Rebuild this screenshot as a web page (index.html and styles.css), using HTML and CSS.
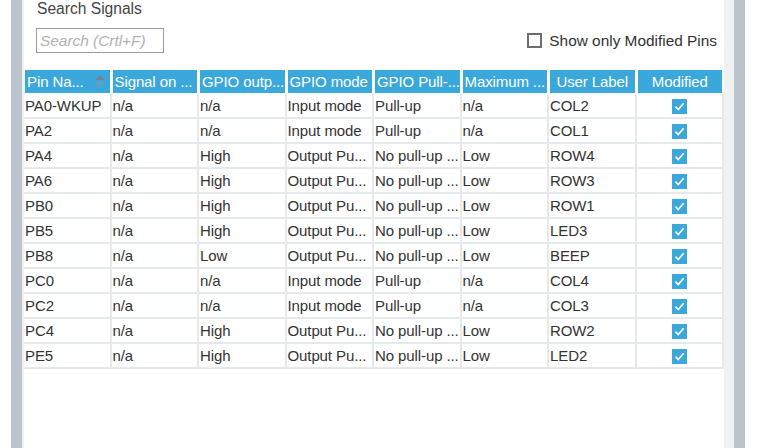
FILE: index.html
```html
<!DOCTYPE html>
<html lang="en">
<head>
  <meta charset="UTF-8">
  <title>Pin Configuration</title>
  <link rel="stylesheet" href="styles.css">
</head>
<body>
  <div class="frame">
    <div class="panel">
      <div class="search-title">Search Signals</div>
      <div class="toolbar">
        <input class="search" type="text" placeholder="Search (Crtl+F)">
        <label class="modified-only"><span class="box"></span>Show only Modified Pins</label>
      </div>

      <table class="pins">
        <thead>
          <tr>
            <th class="sorted">Pin Na...<span class="sort"><i class="up"></i><i class="down"></i></span></th>
            <th>Signal on ...</th>
            <th>GPIO outp...</th>
            <th>GPIO mode</th>
            <th>GPIO Pull-...</th>
            <th>Maximum ...</th>
            <th class="center">User Label</th>
            <th class="center">Modified</th>
          </tr>
        </thead>
        <tbody id="rows"></tbody>
      </table>
    </div>
  </div>

  <script>
    // pin, signal, output level, mode, pull, speed, label
    const pins = [
      ["PA0-WKUP", "n/a", "n/a", "Input mode", "Pull-up", "n/a", "COL2"],
      ["PA2", "n/a", "n/a", "Input mode", "Pull-up", "n/a", "COL1"],
      ["PA4", "n/a", "High", "Output Pu...", "No pull-up ...", "Low", "ROW4"],
      ["PA6", "n/a", "High", "Output Pu...", "No pull-up ...", "Low", "ROW3"],
      ["PB0", "n/a", "High", "Output Pu...", "No pull-up ...", "Low", "ROW1"],
      ["PB5", "n/a", "High", "Output Pu...", "No pull-up ...", "Low", "LED3"],
      ["PB8", "n/a", "Low", "Output Pu...", "No pull-up ...", "Low", "BEEP"],
      ["PC0", "n/a", "n/a", "Input mode", "Pull-up", "n/a", "COL4"],
      ["PC2", "n/a", "n/a", "Input mode", "Pull-up", "n/a", "COL3"],
      ["PC4", "n/a", "High", "Output Pu...", "No pull-up ...", "Low", "ROW2"],
      ["PE5", "n/a", "High", "Output Pu...", "No pull-up ...", "Low", "LED2"]
    ];

    const check = '<svg class="tick" width="15" height="15" viewBox="0 0 15 15">' +
      '<rect width="15" height="15" fill="#3ba8dc"/>' +
      '<polyline points="3.5,7.6 6.3,10.6 11.6,4.2" fill="none" stroke="#fff" stroke-width="1.6"/></svg>';

    const tbody = document.getElementById("rows");
    pins.forEach(p => {
      const tr = document.createElement("tr");
      tr.innerHTML = p.map(v => `<td>${v}</td>`).join("") + `<td class="center">${check}</td>`;
      tbody.appendChild(tr);
    });
  </script>
</body>
</html>
```

FILE: styles.css
```css
body {
  margin: 0;
  font-family: "Liberation Sans", Arial, sans-serif;
  font-size: 15px;
  color: #333;
  background: #fff;
}
.frame {
  margin-left: 11px;
  width: 706px;
  min-height: 448px;
  border-left: 11px solid #bac4ca;
  border-right: 11px solid #bac4ca;
  padding: 0 4px 0 2px;
  background: #eff1f3;
}
.panel {
  background: #fff;
  width: 700px;
  min-height: 448px;
}
.search-title {
  padding-left: 13px;
  line-height: 17px;
  font-size: 15.6px;
  color: #444;
}
.toolbar {
  display: flex;
  justify-content: space-between;
  align-items: center;
  margin-top: 11px;
  height: 25px;
  margin-bottom: 17px;
  padding: 0 7px 0 12px;
}
.search {
  box-sizing: border-box;
  width: 128px;
  height: 25px;
  margin: 0;
  border: 1px solid #9c9c9c;
  padding: 0 3px;
  font-family: inherit;
  font-size: 15.4px;
  font-style: italic;
}
.search::placeholder {
  color: #b2b2b2;
}
.modified-only {
  display: flex;
  align-items: center;
  gap: 7px;
  font-size: 15.4px;
  color: #333;
}
.modified-only .box {
  box-sizing: border-box;
  width: 15px;
  height: 15px;
  border: 2px solid #6d6d6d;
  background: #fff;
}

.pins {
  width: 700px;
  table-layout: fixed;
  border-collapse: separate;
  border-spacing: 0;
  letter-spacing: -0.1px;
}
.pins th {
  height: 23px;
  padding: 0 0 0 2px;
  background: #3ba8dc;
  color: #fff;
  font-weight: normal;
  text-align: left;
  white-space: nowrap;
  overflow: hidden;
  border-left: 1px solid #fff;
  border-right: 2px solid #fff;
  border-bottom: 1px solid #fff;
}
.pins th.center,
.pins td.center {
  text-align: center;
  padding-left: 0;
}
.pins th.sorted {
  position: relative;
}
.sort {
  position: absolute;
  right: 5px;
  top: 5px;
  width: 10px;
  height: 12px;
}
.sort i {
  position: absolute;
  left: 0;
  width: 0;
  height: 0;
  border-left: 5px solid transparent;
  border-right: 5px solid transparent;
}
.sort .up {
  top: 0;
  border-bottom: 5px solid #6e838f;
}
.sort .down {
  top: 7px;
  border-top: 5px solid #6f9bbb;
}
.pins td {
  height: 23px;
  line-height: 23px;
  padding: 0 0 0 1px;
  white-space: nowrap;
  overflow: hidden;
  border-right: 2px solid #e6e9eb;
  border-bottom: 2px solid #e6e9eb;
}
.tick {
  display: inline-block;
  vertical-align: middle;
  margin-top: -2px;
}
```
